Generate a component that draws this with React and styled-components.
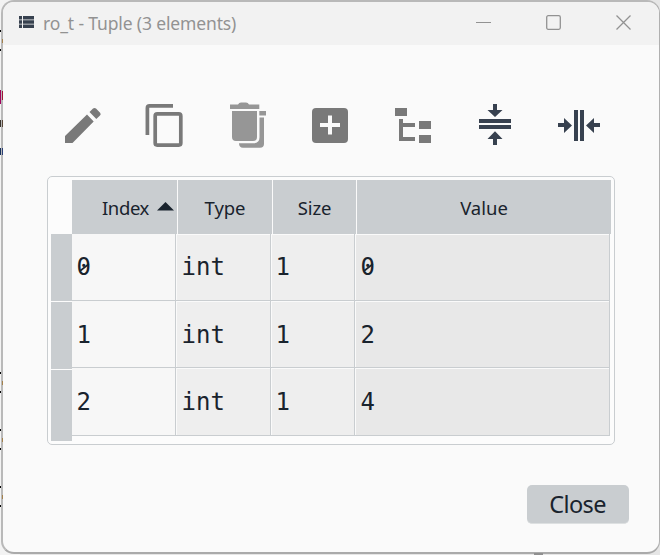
import React from "react";
import styled, { createGlobalStyle } from "styled-components";

const GlobalStyle = createGlobalStyle`
  * { box-sizing: border-box; }
  body { margin: 0; overflow: hidden; background: #e8e8e8; }
`;

const Desktop = styled.div`
  position: relative;
  width: 660px;
  height: 555px;
  padding: 0 0 0 1px;
  overflow: hidden;
  background: linear-gradient(90deg, #f3f3f3 0 20px, #e6e6e6 20px);
`;

/* Slivers of the editor that remain visible beside the dialog */
const Sliver = styled.i`
  position: absolute;
  z-index: ${(p) => (p.$front ? 1 : 0)};
  left: ${(p) => p.$x || 0}px;
  top: ${(p) => p.$y}px;
  width: ${(p) => p.$w || 1}px;
  height: ${(p) => p.$h || 2}px;
  background: ${(p) => p.$color || "#050505"};
`;

const Window = styled.main`
  position: relative;
  width: 659px;
  height: 554px;
  border: 2px solid #b9b9b9;
  border-right-width: 1px;
  border-right-color: #b0b0b0;
  border-bottom-color: #aaa;
  border-radius: 13px;
  background: #fafafa;
  overflow: hidden;
`;

const TitleBar = styled.header`
  display: flex;
  height: 43px;
  padding: 0 27px 0 15px;
  align-items: center;
  background: #f2f2f2;
  color: #929292;
  > svg { margin-bottom: 3px; }
`;

const Title = styled.h1`
  flex: 1;
  margin: 0 0 2px 8px;
  font: 400 17.5px/24px "Noto Sans", "Open Sans", sans-serif;
  letter-spacing: -0.14px;
  white-space: pre;
`;

const Controls = styled.div`
  display: flex;
  gap: 55px;
  margin: 0 1px 2px 0;
`;

const Toolbar = styled.nav`
  display: flex;
  height: 131px;
  padding: 57px 0 0 61px;
`;

const Tool = styled.button`
  width: ${(p) => p.$w}px;
  height: 48px;
  padding: 0;
  border: 0;
  background: none;
  color: ${(p) => p.$color || "#797979"};
  text-align: left;
  svg { display: block; }
`;

const TableFrame = styled.section`
  display: flex;
  width: 568px;
  height: 269px;
  margin-left: 44px;
  padding: 3px;
  border: 1px solid #c9cdd0;
  border-radius: 5px;
  background: #fcfcfc;
`;

const RowHeaders = styled.div`
  display: flex;
  flex-direction: column;
  width: 21px;
  padding-top: 54px;
  background: #fcfcfc;
`;

const RowHeader = styled.div`
  flex: none;
  height: ${(p) => p.$h}px;
  margin-bottom: 1px;
  background: #c9cdd0;
`;

const Table = styled.div`
  width: 539px;
`;

const HeaderRow = styled.div`
  display: grid;
  grid-template-columns: 105px 94px 83px 254px;
  column-gap: 1px;
  height: 54px;
  background: #fafafa;
`;

const HeaderCell = styled.div`
  display: flex;
  align-items: center;
  justify-content: ${(p) => (p.$sorted ? "flex-start" : "center")};
  gap: 8px;
  padding: 2px 0 0 ${(p) => (p.$sorted ? 30 : 0)}px;
  background: #c9cdd0;
  color: #19232d;
  font: 400 18.5px/24px "Noto Sans", "Open Sans", sans-serif;
  letter-spacing: ${(p) => p.$spacing}px;
  svg { flex: none; margin-top: -4px; }
`;

const BodyRow = styled.div`
  display: grid;
  grid-template-columns: 104px 95px 84px 255px;
  grid-template-rows: 100%;
  height: ${(p) => p.$h}px;
`;

const tones = ["#f7f7f7", "#eeeeee", "#eeeeee", "#e8e8e8"];

const Cell = styled.div`
  padding: ${(p) => p.$top}px 0 0 ${(p) => (p.$tone % 2 ? 5.5 : 4.5)}px;
  border-right: 1px solid #c9cdd0;
  border-bottom: 1px solid #c9cdd0;
  box-shadow: inset 1px 1px ${(p) => (p.$tone ? "#fafafa" : "#f7f7f7")};
  background: ${(p) => tones[p.$tone]};
  color: #19232d;
  font: 400 24px/64px "DejaVu Sans Mono", monospace;
  white-space: pre;
`;

const Zero = styled.span`
  position: relative;
  svg { position: absolute; left: 2px; bottom: 7px; }
`;

const Footer = styled.footer`
  display: flex;
  justify-content: flex-end;
  padding: 40px 30px 0 0;
`;

const CloseButton = styled.button`
  width: 102px;
  height: 39px;
  padding: 0 1px 0 0;
  border: 0;
  border-bottom: 1px solid #dde0e1;
  border-radius: 5px;
  background: #c9cdd0;
  color: #19232d;
  font: 400 23.5px/34px "Noto Sans", "Open Sans", sans-serif;
  letter-spacing: -0.6px;
`;

const slivers = [
  { $y: 30 }, { $y: 49 }, { $y: 39, $x: 2, $h: 4, $color: "#a4814c", $front: true },
  { $y: 90, $h: 14, $color: "#a0005d" },
  { $y: 91, $x: 2, $h: 9, $color: "#a01535", $front: true },
  { $y: 120, $h: 7, $color: "#39342f" },
  { $y: 120, $x: 2, $h: 7, $color: "#584637", $front: true },
  { $y: 148, $h: 7, $color: "#17305a" },
  { $y: 148, $x: 2, $h: 7, $color: "#2b3f75", $front: true },
  { $y: 372 }, { $y: 391 }, { $y: 429 }, { $y: 448 }, { $y: 486 }, { $y: 505 },
  { $y: 381, $x: 2, $h: 4, $color: "#a4814c", $front: true },
  { $y: 438, $x: 2, $h: 4, $color: "#a4814c", $front: true },
  { $y: 495, $x: 2, $h: 4, $color: "#a4814c", $front: true },
  { $x: 534, $y: 553, $w: 9, $color: "#909090", $front: true },
];

const rows = [
  ["0", "int", "1", "0"],
  ["1", "int", "1", "2"],
  ["2", "int", "1", "4"],
];
const rowHeights = [67, 67, 68];
const topInsets = [1, 2, 2];

const ZeroDigit = () => (
  <Zero>
    0
    <svg width="11" height="14" viewBox="0 0 11 14">
      <path d="M1 11L9.8 4" stroke="#19232d" strokeWidth="1.6" />
    </svg>
  </Zero>
);

export default function App() {
  return (
    <>
      <GlobalStyle />
      <Desktop>
        {slivers.map((s, i) => <Sliver key={i} {...s} />)}
        <Window>
          <TitleBar>
            <svg width="17" height="14" viewBox="0 0 17 14">
              <path fill="#37414f" d="M1 1h3v3.6H1zM5 1h11v3.6H5zM1 5.3h3v3.4H1zM5 5.3h11v3.4H5zM1 9.4h3V13H1zM5 9.4h11V13H5z" />
            </svg>
            <Title>ro_t - Tuple (3 elements)</Title>
            <Controls>
              <svg width="15" height="15"><path d="M0 7.5h15" stroke="#929292" /></svg>
              <svg width="15" height="15"><rect x=".7" y=".7" width="13.6" height="13.6" rx="1.5" fill="none" stroke="#929292" strokeWidth="1.3" /></svg>
              <svg width="15" height="15"><path d="M.5.5l14 14M14.5.5l-14 14" stroke="#929292" strokeWidth="1.3" /></svg>
            </Controls>
          </TitleBar>
          <Toolbar>
            <Tool $w={80} aria-label="Edit">
              <svg width="42" height="48" fill="currentColor">
                <path d="M1 34L23 12.5L29.7 19.5L8.5 41H1zM25.5 10L29 6.6Q30.5 5.2 32 6.6L36.1 10.7Q37.4 12.1 36 13.5L32.3 17z" />
              </svg>
            </Tool>
            <Tool $w={84} aria-label="Copy">
              <svg width="42" height="48" fill="none" stroke="currentColor" strokeWidth="3.7">
                <path d="M3.4 33V6q0-2.1 2.1-2.1H29" />
                <rect x="11.2" y="11.9" width="25.6" height="31.2" rx="2" />
              </svg>
            </Tool>
            <Tool $w={83} $color="#969696" aria-label="Remove">
              <svg width="42" height="48" fill="currentColor">
                <path d="M2 2.5h8q1-2 3-2h5q2 0 3 2h10.3v4.5H2zM4 9h25v26q0 4-4 4H8q-4 0-4-4zM31.3 9H38v4.5h-6.7zM31.5 15.5H36V42q0 3.7-4 3.7H15q-4 0-4-4.4h14.5q6 0 6-6z" />
              </svg>
            </Tool>
            <Tool $w={83} aria-label="Insert">
              <svg width="42" height="48">
                <rect x="1" y="6" width="36" height="35" rx="4" fill="currentColor" />
                <path d="M9 23h20M19 13.5v19" stroke="#fafafa" strokeWidth="4" />
              </svg>
            </Tool>
            <Tool $w={84} aria-label="View as tree">
              <svg width="42" height="48" fill="currentColor">
                <path d="M1 6h12v8H1zM25 19h12v8H25zM25 33h12v8H25zM5 17h4v4h12v4H9v10h12v4H5z" />
              </svg>
            </Tool>
            <Tool $w={79} $color="#37414f" aria-label="Resize rows">
              <svg width="42" height="48" fill="currentColor">
                <path d="M1 17h32v4H1zM1 23h32v4H1zM15 2h4v6h5.5l-7.5 7-7.5-7H15zM15 43h4v-6h5.5l-7.5-7.7L9.5 37H15z" />
              </svg>
            </Tool>
            <Tool $w={44} $color="#37414f" aria-label="Resize columns">
              <svg width="44" height="48" fill="currentColor">
                <path d="M17 8h4v31h-4zM23 8h4v31h-4zM1 21h6v-5l8 7.5-8 7.5v-6H1zM43 21h-6v-5l-8 7.5 8 7.5v-6h6z" />
              </svg>
            </Tool>
          </Toolbar>
          <TableFrame>
            <RowHeaders>
              <RowHeader $h={67} />
              <RowHeader $h={67} />
              <RowHeader $h={71} />
            </RowHeaders>
            <Table>
              <HeaderRow>
                <HeaderCell $sorted $spacing={-0.4}>
                  Index
                  <svg width="17" height="9"><path d="M0 8.5L8.5 0 17 8.5z" fill="#19232d" /></svg>
                </HeaderCell>
                <HeaderCell $spacing={-0.1}>Type</HeaderCell>
                <HeaderCell $spacing={-0.2}>Size</HeaderCell>
                <HeaderCell $spacing={0}>Value</HeaderCell>
              </HeaderRow>
              {rows.map((row, r) => (
                <BodyRow key={r} $h={rowHeights[r]}>
                  {row.map((v, c) => (
                    <Cell key={c} $tone={c} $top={topInsets[r]}>
                      {v === "0" ? <ZeroDigit /> : v}
                    </Cell>
                  ))}
                </BodyRow>
              ))}
            </Table>
          </TableFrame>
          <Footer>
            <CloseButton>Close</CloseButton>
          </Footer>
        </Window>
      </Desktop>
    </>
  );
}
